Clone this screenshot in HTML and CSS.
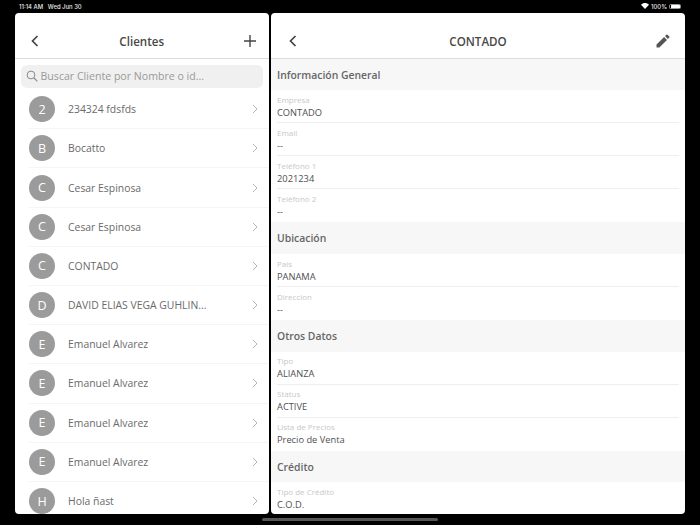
FILE: index.html
```html
<!DOCTYPE html>
<html lang="es">
<head>
<meta charset="utf-8">
<title>Clientes</title>
<link rel="stylesheet" href="styles.css">
</head>
<body>
<div class="statusbar">
  <span>11:14 AM&nbsp;&nbsp; Wed Jun 30</span>
  <span class="status-right">
    <svg class="wifi" viewBox="0 0 12 9" width="8" height="6"><path d="M6 9 0 2.6C3.4-.8 8.6-.8 12 2.6Z" fill="#fff"/></svg>
    <span>100%</span>
    <span class="battery"><span class="battery-fill"></span></span>
  </span>
</div>
<main class="panes">
  <section class="pane pane-list">
    <header class="navbar">
      <svg class="nav-icon" viewBox="0 0 14 14" width="14" height="14"><path d="M9.5 2 4.5 7l5 5" fill="none" stroke="#444" stroke-width="1.7"/></svg>
      <h1 class="nav-title">Clientes</h1>
      <svg class="nav-icon" viewBox="0 0 14 14" width="14" height="14"><path d="M7 1v12M1 7h12" fill="none" stroke="#444" stroke-width="1.4"/></svg>
    </header>
    <div class="searchwrap">
      <div class="search">
        <svg viewBox="0 0 12 12" width="12" height="12"><circle cx="5" cy="5" r="3.9" fill="none" stroke="#8a8a8a" stroke-width="1"/><path d="m8 8 3.4 3.4" stroke="#8a8a8a" stroke-width="1.1"/></svg>
        <span>Buscar Cliente por Nombre o id...</span>
      </div>
    </div>
    <ul class="clients">
      <li class="client"><span class="avatar">2</span><span class="client-name">234324 fdsfds</span><svg class="chev" viewBox="0 0 6 10" width="6" height="10"><path d="m1 1 4 4-4 4" fill="none" stroke="#b5b5b5"/></svg></li>
      <li class="client"><span class="avatar">B</span><span class="client-name">Bocatto</span><svg class="chev" viewBox="0 0 6 10" width="6" height="10"><path d="m1 1 4 4-4 4" fill="none" stroke="#b5b5b5"/></svg></li>
      <li class="client"><span class="avatar">C</span><span class="client-name">Cesar Espinosa</span><svg class="chev" viewBox="0 0 6 10" width="6" height="10"><path d="m1 1 4 4-4 4" fill="none" stroke="#b5b5b5"/></svg></li>
      <li class="client"><span class="avatar">C</span><span class="client-name">Cesar Espinosa</span><svg class="chev" viewBox="0 0 6 10" width="6" height="10"><path d="m1 1 4 4-4 4" fill="none" stroke="#b5b5b5"/></svg></li>
      <li class="client"><span class="avatar">C</span><span class="client-name">CONTADO</span><svg class="chev" viewBox="0 0 6 10" width="6" height="10"><path d="m1 1 4 4-4 4" fill="none" stroke="#b5b5b5"/></svg></li>
      <li class="client"><span class="avatar">D</span><span class="client-name">DAVID ELIAS VEGA GUHLIN...</span><svg class="chev" viewBox="0 0 6 10" width="6" height="10"><path d="m1 1 4 4-4 4" fill="none" stroke="#b5b5b5"/></svg></li>
      <li class="client"><span class="avatar">E</span><span class="client-name">Emanuel Alvarez</span><svg class="chev" viewBox="0 0 6 10" width="6" height="10"><path d="m1 1 4 4-4 4" fill="none" stroke="#b5b5b5"/></svg></li>
      <li class="client"><span class="avatar">E</span><span class="client-name">Emanuel Alvarez</span><svg class="chev" viewBox="0 0 6 10" width="6" height="10"><path d="m1 1 4 4-4 4" fill="none" stroke="#b5b5b5"/></svg></li>
      <li class="client"><span class="avatar">E</span><span class="client-name">Emanuel Alvarez</span><svg class="chev" viewBox="0 0 6 10" width="6" height="10"><path d="m1 1 4 4-4 4" fill="none" stroke="#b5b5b5"/></svg></li>
      <li class="client"><span class="avatar">E</span><span class="client-name">Emanuel Alvarez</span><svg class="chev" viewBox="0 0 6 10" width="6" height="10"><path d="m1 1 4 4-4 4" fill="none" stroke="#b5b5b5"/></svg></li>
      <li class="client"><span class="avatar">H</span><span class="client-name">Hola ñast</span><svg class="chev" viewBox="0 0 6 10" width="6" height="10"><path d="m1 1 4 4-4 4" fill="none" stroke="#b5b5b5"/></svg></li>
    </ul>
  </section>
  <section class="pane pane-detail">
    <header class="navbar">
      <svg class="nav-icon" viewBox="0 0 14 14" width="14" height="14"><path d="M9.5 2 4.5 7l5 5" fill="none" stroke="#444" stroke-width="1.7"/></svg>
      <h1 class="nav-title">CONTADO</h1>
      <svg class="nav-icon" viewBox="0 0 14 14" width="14" height="14"><path d="M0.5 10.6V13.5H3.4L11 5.9 8.1 3ZM13.3 3.6a.8.8 0 0 0 0-1.1L11.5.7a.8.8 0 0 0-1.1 0L9 2.1 11.9 5Z" fill="#555"/></svg>
    </header>
    <h2 class="section-title">Información General</h2>
    <div class="field"><span class="field-label">Empresa</span><span class="field-value">CONTADO</span></div>
    <div class="field"><span class="field-label">Email</span><span class="field-value">--</span></div>
    <div class="field"><span class="field-label">Teléfono 1</span><span class="field-value">2021234</span></div>
    <div class="field"><span class="field-label">Teléfono 2</span><span class="field-value">--</span></div>
    <h2 class="section-title">Ubicación</h2>
    <div class="field"><span class="field-label">País</span><span class="field-value">PANAMA</span></div>
    <div class="field"><span class="field-label">Direccion</span><span class="field-value">--</span></div>
    <h2 class="section-title">Otros Datos</h2>
    <div class="field"><span class="field-label">Tipo</span><span class="field-value">ALIANZA</span></div>
    <div class="field"><span class="field-label">Status</span><span class="field-value">ACTIVE</span></div>
    <div class="field"><span class="field-label">Lista de Precios</span><span class="field-value">Precio de Venta</span></div>
    <h2 class="section-title">Crédito</h2>
    <div class="field"><span class="field-label">Tipo de Crédito</span><span class="field-value">C.O.D.</span></div>
  </section>
</main>
<div class="homebar"><span class="home-indicator"></span></div>
</body>
</html>
```
FILE: styles.css
```css
* { box-sizing: border-box; margin: 0; padding: 0; }
html, body { height: 100%; }
body {
  background: #000;
  font-family: "Open Sans", "Liberation Sans", sans-serif;
  display: flex;
  flex-direction: column;
  overflow: hidden;
  height: 525px;
}
.statusbar {
  height: 12.5px;
  display: flex;
  justify-content: space-between;
  align-items: center;
  padding: 0 19px;
  color: #ececec;
  font-size: 5.9px;
  font-weight: 500;
  font-family: Inter, "Liberation Sans", sans-serif;
}
.status-right { display: flex; align-items: center; gap: 2px; }
.wifi { display: block; }
.battery {
  width: 12px;
  height: 5.5px;
  border: 0.5px solid #999;
  border-radius: 1.5px;
  padding: 0.5px;
  display: block;
}
.battery-fill { display: block; height: 100%; background: #fff; border-radius: 0.5px; }
.panes {
  height: 501.5px;
  display: flex;
  gap: 2.5px;
  padding: 0 15px;
}
.pane {
  background: #fff;
  border-radius: 4px;
  overflow: hidden;
  color: #4d4d4d;
}
.pane-list { width: 253.5px; }
.pane-detail { width: 414px; }
.navbar {
  height: 46.2px;
  padding: 12.5px 12px 0 13px;
  display: flex;
  align-items: center;
  justify-content: space-between;
  border-bottom: 1px solid #dcdcdc;
}
.pane-detail .navbar { padding-left: 15px; padding-right: 15px; }
.nav-icon { display: block; flex: none; }
.nav-title { font-size: 11.6px; font-weight: 600; color: #484848; }
.pane-list .nav-title { margin-right: 1px; }
.searchwrap { padding: 6.3px 5.5px 0 6px; }
.search {
  height: 23px;
  background: #f0f0f0;
  border-radius: 6px;
  display: flex;
  align-items: center;
  gap: 2.5px;
  padding-left: 5px;
  font-size: 10.6px;
  color: #9a9a9a;
}
.clients { list-style: none; padding-left: 14px; padding-top: 2.1px; }
.client {
  height: 39.2px;
  display: flex;
  align-items: center;
  border-bottom: 1px solid #f5f5f5;
  padding-right: 10.5px;
}
.avatar {
  width: 26px;
  height: 26px;
  border-radius: 50%;
  background: #9b9b9b;
  color: #fff;
  display: flex;
  align-items: center;
  justify-content: center;
  font-size: 12.5px;
  font-weight: 500;
  flex: none;
}
.client-name { margin-left: 13px; flex: 1; font-size: 10.4px; color: #6a6a6a; }
.chev { display: block; flex: none; }
.section-title {
  height: 31.7px;
  background: #f7f7f7;
  display: flex;
  align-items: center;
  padding-left: 6px;
  font-size: 10.4px;
  font-weight: 600;
  color: #666;
}
.field {
  height: 33px;
  margin: 0 6px;
  padding-top: 3.5px;
  display: flex;
  flex-direction: column;
  border-bottom: 1px solid #eeeeee;
}
.field:has(+ .section-title), .field:last-child { border-bottom: 0; }
.field-label { font-size: 8px; line-height: 11px; color: #c8c8c8; }
.field-value { font-size: 9.3px; line-height: 15px; color: #505050; }
.homebar {
  flex: 1;
  display: flex;
  align-items: flex-start;
  justify-content: center;
  padding-top: 4px;
}
.home-indicator { width: 176px; height: 2.5px; border-radius: 2px; background: #555; }
```
